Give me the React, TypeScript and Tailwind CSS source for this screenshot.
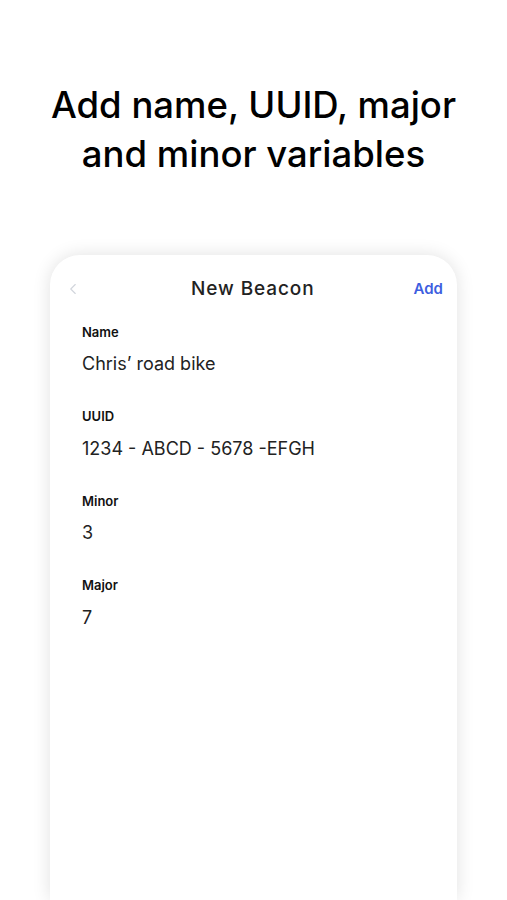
import { ChevronLeft } from "lucide-react";

const fields = [
  { label: "Name", value: "Chris’ road bike" },
  { label: "UUID", value: "1234 - ABCD - 5678 -EFGH" },
  { label: "Minor", value: "3" },
  { label: "Major", value: "7" },
];

export default function App() {
  return (
    <div
      className="flex h-[900px] w-full flex-col items-center overflow-hidden bg-white"
      style={{ fontFamily: "Inter, 'Noto Sans', sans-serif" }}
    >
      <h1 className="mt-[81px] text-center text-[36.5px] font-medium leading-[49px] tracking-[0px] text-black">
        Add name, UUID, major
        <br />
        and minor variables
      </h1>
      <div className="mt-[76px] flex w-[407px] flex-1 flex-col rounded-t-[30px] bg-white shadow-[0_0_18px_rgba(0,0,0,0.12)]">
        <div className="flex items-center justify-between px-[14px] pt-[20px]">
          <ChevronLeft className="h-[18px] w-[18px] text-gray-300" strokeWidth={1.5} />
          <span className="ml-[10px] text-[19px] font-medium tracking-[0.9px] text-[#222]">
            New Beacon
          </span>
          <span className="text-[15px] font-semibold text-[#3d5ee0]">Add</span>
        </div>
        <div className="flex flex-col gap-[30px] px-[32px] pt-[19px]">
          {fields.map((f) => (
            <div key={f.label} className="flex flex-col gap-[8px]">
              <span className="text-[13px] font-semibold text-[#111]">{f.label}</span>
              <span className="text-[18px] text-[#222]">{f.value}</span>
            </div>
          ))}
        </div>
      </div>
    </div>
  );
}
